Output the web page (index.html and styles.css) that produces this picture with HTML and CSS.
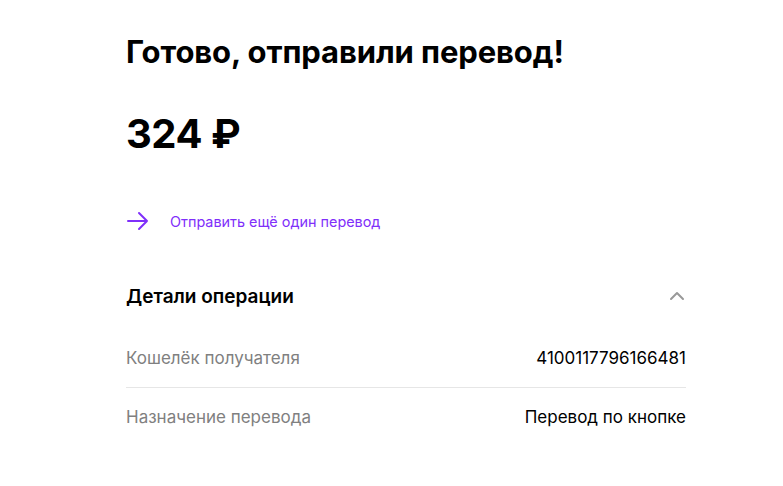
FILE: index.html
```html
<!DOCTYPE html>
<html lang="ru">

<head>
  <meta charset="UTF-8">
  <meta name="viewport" content="width=device-width, initial-scale=1.0">
  <title>Перевод отправлен</title>
  <link rel="stylesheet" href="styles.css">
</head>

<body>
  <main class="page">
    <h1 class="title">Готово, отправили перевод!</h1>
    <div class="amount">324 ₽</div>

    <a class="repeat-link" href="#">
      <svg class="repeat-icon" width="24" height="24" viewBox="0 0 24 24" fill="none">
        <path d="M2 12h19M13 4l8 8-8 8" stroke="currentColor" stroke-width="2" stroke-linecap="round" stroke-linejoin="round" />
      </svg>
      <span>Отправить ещё один перевод</span>
    </a>

    <section class="details">
      <div class="details-head">
        <h2 class="details-title">Детали операции</h2>
        <svg class="chevron" width="16" height="16" viewBox="0 0 16 16" fill="none">
          <path d="M2 11l6-6 6 6" stroke="currentColor" stroke-width="2" stroke-linecap="round" stroke-linejoin="round" />
        </svg>
      </div>

      <div class="detail-row">
        <span class="detail-label">Кошелёк получателя</span>
        <span class="detail-value">4100117796166481</span>
      </div>
      <div class="detail-row">
        <span class="detail-label">Назначение перевода</span>
        <span class="detail-value">Перевод по кнопке</span>
      </div>
    </section>
  </main>
</body>

</html>
```

FILE: styles.css
```css
body {
  margin: 0;
  font-family: 'Inter', 'Noto Sans', sans-serif;
  background-color: #ffffff;
  color: #000000;
}

.page {
  width: 560px;
  padding: 33px 0 0 126px;
}

.title {
  margin: 0;
  font-size: 31px;
  line-height: 38px;
  font-weight: 700;
  letter-spacing: -0.1px;
}

.amount {
  margin-top: 40px;
  font-size: 40px;
  line-height: 46px;
  font-weight: 700;
  letter-spacing: -0.5px;
}

.repeat-link {
  display: flex;
  align-items: center;
  gap: 20px;
  margin-top: 52px;
  color: #7f2ffa;
  text-decoration: none;
  font-size: 14.4px;
}

.repeat-icon {
  display: block;
}

.details {
  margin-top: 48px;
}

.details-head {
  display: flex;
  justify-content: space-between;
  align-items: center;
  height: 30px;
}

.details-title {
  margin: 0;
  font-size: 19px;
  font-weight: 600;
}

.chevron {
  color: #999999;
  margin-right: 1px;
}

.detail-row {
  display: flex;
  justify-content: space-between;
  align-items: center;
  height: 58px;
  font-size: 17px;
}

.detail-row + .detail-row {
  border-top: 1px solid #e6e6e6;
}

.details-head + .detail-row {
  margin-top: 18px;
}

.detail-label {
  color: #808080;
}

.detail-value {
  color: #000000;
}
```
